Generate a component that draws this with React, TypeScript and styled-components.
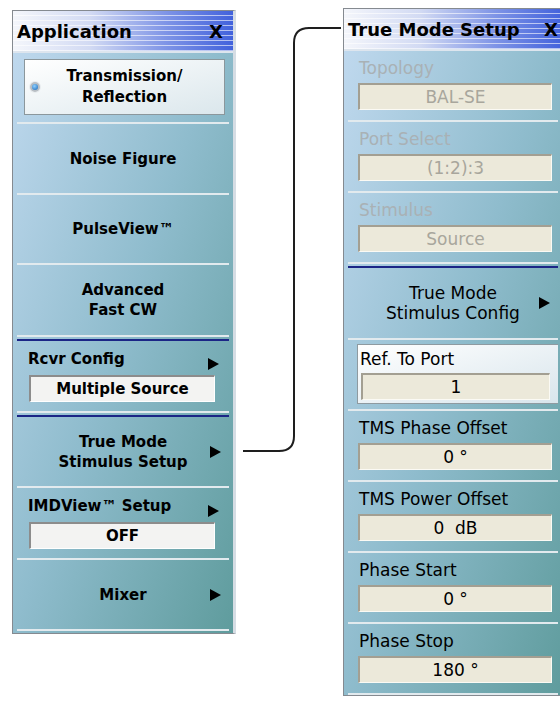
import React from 'react';
import styled, { createGlobalStyle } from 'styled-components';

const GlobalStyle = createGlobalStyle`
  html, body { margin: 0; padding: 0; background: #ffffff; }
  body { width: 560px; height: 704px; overflow: hidden; }
`;

const Page = styled.div`
  display: flex;
  align-items: flex-start;
  width: 560px;
  height: 704px;
  overflow: hidden;
  padding-left: 12px;
  box-sizing: border-box;
  font-family: "DejaVu Sans", "Liberation Sans", sans-serif;
  color: #000;
`;

const Panel = styled.div<{ $top: number; $width: number }>`
  flex: none;
  margin-top: ${p => p.$top}px;
  width: ${p => p.$width}px;
  box-sizing: border-box;
  border: 1px solid #858a90;
  border-right: 3px solid #d6dde4;
  background: linear-gradient(to bottom right, #c2daf0 0%, #8fbccd 50%, #5f9c9d 100%);
`;

const TitleBar = styled.div<{ $padRight: number }>`
  height: 40px;
  display: flex;
  align-items: center;
  justify-content: space-between;
  padding: 0 ${p => p.$padRight}px 0 4px;
  border-bottom: 2px solid #dde5ee;
  background:
    repeating-linear-gradient(to bottom, transparent 0 4px, rgba(255, 255, 255, 0.6) 4px 5px),
    linear-gradient(to right, #f4f6fb 0%, #d2daf3 35%, #7d93e6 70%, #4262dc 100%);
  font-weight: bold;
  font-size: 18px;
`;

const Cell = styled.div<{ $h: number }>`
  height: ${p => p.$h}px;
  box-sizing: border-box;
  margin: 0 4px;
  border-bottom: 2px solid #e2eaee;
  display: flex;
  flex-direction: column;
`;

const NavyRule = styled.div`
  height: 2px;
  margin: 2px 4px 0;
  background: #1b2586;
`;

const CenterRow = styled.div<{ $bold?: boolean }>`
  flex: 1;
  display: grid;
  grid-template-columns: 1fr auto 1fr;
  align-items: center;
  text-align: center;
  font-weight: ${p => (p.$bold ? 'bold' : 'normal')};
  font-size: ${p => (p.$bold ? 15 : 17)}px;
  line-height: 20px;
`;

const Arrow = styled.span`
  justify-self: end;
  margin-right: 8px;
  width: 0;
  height: 0;
  border-left: 11px solid #000;
  border-top: 6px solid transparent;
  border-bottom: 6px solid transparent;
`;

const Spacer = styled.span``;

const SelectedButton = styled.div`
  margin: 6px 4px 0 7px;
  height: 56px;
  box-sizing: border-box;
  border: 1px solid #8b979c;
  background: linear-gradient(to bottom right, #ffffff, #dbe7ec);
  display: grid;
  grid-template-columns: 20px 1fr 20px;
  align-items: center;
  text-align: center;
  font-weight: bold;
  font-size: 15px;
  line-height: 21px;
`;

const Radio = styled.span`
  justify-self: center;
  width: 6px;
  height: 6px;
  border-radius: 50%;
  background: radial-gradient(circle at 40% 35%, #8fd0ff, #1766b8);
  border: 2px solid #b8bec4;
  box-shadow: 0 0 0 1px #e8ecef;
`;

const LabelRow = styled.div<{ $bold?: boolean; $dim?: boolean }>`
  display: flex;
  align-items: center;
  justify-content: space-between;
  padding-left: 11px;
  height: 20px;
  margin-top: ${p => (p.$bold ? 8 : 7)}px;
  font-weight: ${p => (p.$bold ? 'bold' : 'normal')};
  font-size: ${p => (p.$bold ? 15 : 17)}px;
  color: ${p => (p.$dim ? '#a9b1b5' : '#000')};
`;

const SideArrow = styled(Arrow)`
  margin-top: 10px;
  margin-right: 10px;
`;

const BoldField = styled.div`
  margin: 6px 14px 0 12px;
  height: 27px;
  box-sizing: border-box;
  border-top: 2px solid #8c8c8c;
  border-left: 2px solid #8c8c8c;
  border-right: 1px solid #ffffff;
  border-bottom: 1px solid #ffffff;
  background: #f3f3f2;
  display: flex;
  align-items: center;
  justify-content: center;
  font-weight: bold;
  font-size: 15px;
`;

const Field = styled.div<{ $dim?: boolean }>`
  margin: 5px 6px 0 10px;
  height: 27px;
  box-sizing: border-box;
  border-top: 2px solid #a39f92;
  border-left: 2px solid #a39f92;
  border-right: 1px solid #fbfaf4;
  border-bottom: 1px solid #fbfaf4;
  background: #ece9da;
  display: flex;
  align-items: center;
  justify-content: center;
  font-size: 17px;
  color: ${p => (p.$dim ? '#a8a69c' : '#000')};
`;

const HighlightBox = styled.div`
  margin: 4px 0 0 9px;
  height: 60px;
  box-sizing: border-box;
  border: 1px solid #8e9aa0;
  border-right: none;
  background: linear-gradient(to bottom right, #ffffff, #d8e5ec);
  display: flex;
  flex-direction: column;
`;

const HighlightLabel = styled.div`
  font-size: 17px;
  height: 20px;
  margin-top: 4px;
  padding-left: 2px;
`;

const InnerField = styled(Field)`
  margin: 4px 8px 0 3px;
`;

const Connector = styled.svg`
  flex: none;
  display: block;
`;

const BottomGap = styled.div`
  height: 2px;
`;

type FieldItem = { label: string; value: string; dim?: boolean };

const disabledFields: FieldItem[] = [
  { label: 'Topology', value: 'BAL-SE', dim: true },
  { label: 'Port Select', value: '(1:2):3', dim: true },
  { label: 'Stimulus', value: 'Source', dim: true },
];

const offsetFields: FieldItem[] = [
  { label: 'TMS Phase Offset', value: '0 °' },
  { label: 'TMS Power Offset', value: '0\u00a0 dB' },
  { label: 'Phase Start', value: '0 °' },
  { label: 'Phase Stop', value: '180 °' },
];

const ApplicationPanel = () => (
  <Panel $top={10} $width={224}>
    <TitleBar $padRight={10}>
      <span>Application</span>
      <span>X</span>
    </TitleBar>
    <Cell $h={71}>
      <SelectedButton>
        <Radio />
        <span>Transmission/<br />Reflection</span>
        <Spacer />
      </SelectedButton>
    </Cell>
    <Cell $h={71}>
      <CenterRow $bold><Spacer /><span>Noise Figure</span><Spacer /></CenterRow>
    </Cell>
    <Cell $h={70}>
      <CenterRow $bold><Spacer /><span>PulseView™</span><Spacer /></CenterRow>
    </Cell>
    <Cell $h={72}>
      <CenterRow $bold><Spacer /><span>Advanced<br />Fast CW</span><Spacer /></CenterRow>
    </Cell>
    <NavyRule />
    <Cell $h={72}>
      <LabelRow $bold>
        <span>Rcvr Config</span>
        <SideArrow />
      </LabelRow>
      <BoldField>Multiple Source</BoldField>
    </Cell>
    <NavyRule />
    <Cell $h={71}>
      <CenterRow $bold><Spacer /><span>True Mode<br />Stimulus Setup</span><Arrow /></CenterRow>
    </Cell>
    <Cell $h={72}>
      <LabelRow $bold>
        <span>IMDView™ Setup</span>
        <SideArrow />
      </LabelRow>
      <BoldField>OFF</BoldField>
    </Cell>
    <Cell $h={71}>
      <CenterRow $bold><Spacer /><span>Mixer</span><Arrow /></CenterRow>
    </Cell>
    <BottomGap />
  </Panel>
);

const TrueModePanel = () => (
  <Panel $top={8} $width={222}>
    <TitleBar $padRight={4}>
      <span>True Mode Setup</span>
      <span>X</span>
    </TitleBar>
    {disabledFields.map(f => (
      <Cell $h={71} key={f.label}>
        <LabelRow $dim={f.dim}><span>{f.label}</span></LabelRow>
        <Field $dim={f.dim}>{f.value}</Field>
      </Cell>
    ))}
    <NavyRule />
    <Cell $h={72}>
      <CenterRow><Spacer /><span>True Mode<br />Stimulus Config</span><Arrow /></CenterRow>
    </Cell>
    <Cell $h={71}>
      <HighlightBox>
        <HighlightLabel>Ref. To Port</HighlightLabel>
        <InnerField>1</InnerField>
      </HighlightBox>
    </Cell>
    {offsetFields.map(f => (
      <Cell $h={71} key={f.label}>
        <LabelRow><span>{f.label}</span></LabelRow>
        <Field>{f.value}</Field>
      </Cell>
    ))}
  </Panel>
);

export default function App() {
  return (
    <>
      <GlobalStyle />
      <Page>
        <ApplicationPanel />
        <Connector width="107" height="470" viewBox="0 0 107 470">
          <path
            d="M7 451 H43 Q58 451 58 436 V43 Q58 28 73 28 H105"
            fill="none"
            stroke="#1e1e1e"
            strokeWidth="2"
          />
        </Connector>
        <TrueModePanel />
      </Page>
    </>
  );
}
